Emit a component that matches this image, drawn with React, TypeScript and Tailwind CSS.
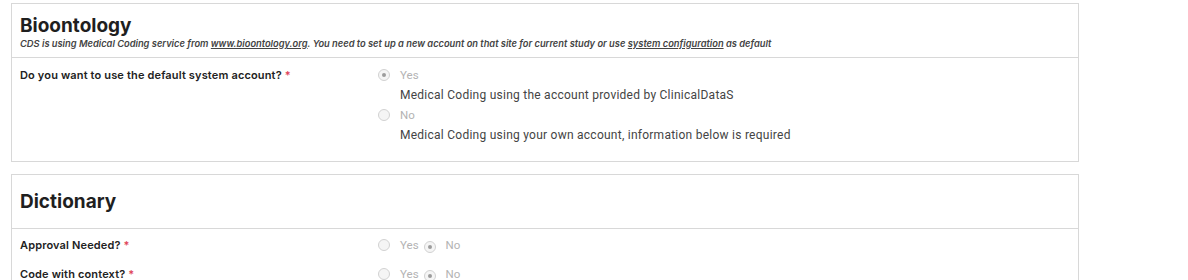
import React from "react";

function Radio({ checked }: { checked?: boolean }) {
  return (
    <span className="inline-flex h-[12px] w-[12px] shrink-0 items-center justify-center rounded-full border border-[#d2d2d2] bg-[#f5f5f5]">
      {checked ? <span className="h-[4px] w-[4px] rounded-full bg-[#9c9c9c]" /> : null}
    </span>
  );
}

function Label({ text }: { text: string }) {
  return (
    <div className="w-[358px] shrink-0 text-[11px] font-semibold leading-[20px] tracking-[0.15px] text-[#222]">
      {text} <span className="text-[#e0455a]">*</span>
    </div>
  );
}

function YesNo() {
  return (
    <div className="flex items-center text-[11.5px] leading-[20px] font-['Roboto',sans-serif]">
      <Radio />
      <span className="ml-[10px] text-[#b3b3b3]">Yes</span>
      <span className="ml-[5px]">
        <Radio checked />
      </span>
      <span className="ml-[10px] text-[#b3b3b3]">No</span>
    </div>
  );
}

export default function App() {
  return (
    <div className="min-h-[280px] bg-white pl-[11px] pt-[3px] font-['Inter',sans-serif]">
      <div className="w-[1068px]">
        <section className="border border-[#d8d8d8]">
          <div className="h-[54px] border-b border-[#d8d8d8] px-2 pt-[11px]">
            <h1 className="text-[19px] font-bold leading-[22px] text-[#1f1f1f]">Bioontology</h1>
            <p className="mt-[1px] text-[9.3px] font-semibold italic leading-[12px] text-[#444]">
              CDS is using Medical Coding service from{" "}
              <span className="underline">www.bioontology.org</span>. You need to set up a new account on that site for
              current study or use <span className="underline">system configuration</span> as default
            </p>
          </div>
          <div className="flex px-2 pt-[7px] pb-[16px]">
            <Label text="Do you want to use the default system account?" />
            <div className="text-[12px] leading-[20px] font-['Roboto',sans-serif]">
              <div className="flex items-center">
                <Radio checked />
                <span className="ml-[10px] text-[11.5px] text-[#b3b3b3]">Yes</span>
              </div>
              <div className="pl-[22px] tracking-[0.25px] text-[#444]">
                Medical Coding using the account provided by ClinicalDataS
              </div>
              <div className="flex items-center">
                <Radio />
                <span className="ml-[10px] text-[11.5px] text-[#b3b3b3]">No</span>
              </div>
              <div className="pl-[22px] tracking-[0.25px] text-[#444]">
                Medical Coding using your own account, information below is required
              </div>
            </div>
          </div>
        </section>

        <section className="mt-[12px] border border-[#d8d8d8]">
          <div className="flex h-[54px] items-center border-b border-[#d8d8d8] px-2">
            <h1 className="text-[19px] font-bold leading-[22px] text-[#1f1f1f]">Dictionary</h1>
          </div>
          <div className="flex flex-col gap-[9px] px-2 pt-[6px] pb-[16px]">
            <div className="flex">
              <Label text="Approval Needed?" />
              <YesNo />
            </div>
            <div className="flex">
              <Label text="Code with context?" />
              <YesNo />
            </div>
          </div>
        </section>
      </div>
    </div>
  );
}
